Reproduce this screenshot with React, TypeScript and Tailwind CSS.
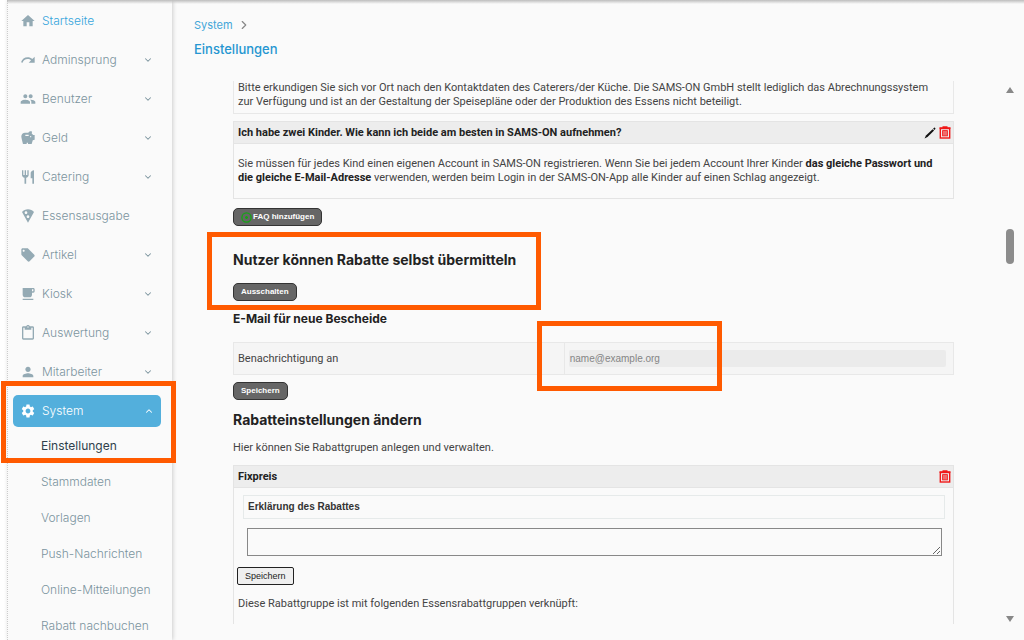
import React, { useState } from 'react';
import type { IconType } from 'react-icons';
import {
    MdContentPaste,
    MdHome,
    MdLocalCafe,
    MdLocalOffer,
    MdLocalPizza,
    MdPeople,
    MdPerson,
    MdRedo,
    MdRestaurant,
    MdSavings,
    MdSettings,
} from 'react-icons/md';
import { ChevronDown, ChevronRight, ChevronUp } from 'lucide-react';

interface NavItem {
    label: string;
    icon: IconType;
    expandable?: boolean;
    active?: boolean;
}

const navItems: NavItem[] = [
    { label: 'Startseite', icon: MdHome, active: true },
    { label: 'Adminsprung', icon: MdRedo, expandable: true },
    { label: 'Benutzer', icon: MdPeople, expandable: true },
    { label: 'Geld', icon: MdSavings, expandable: true },
    { label: 'Catering', icon: MdRestaurant, expandable: true },
    { label: 'Essensausgabe', icon: MdLocalPizza },
    { label: 'Artikel', icon: MdLocalOffer, expandable: true },
    { label: 'Kiosk', icon: MdLocalCafe, expandable: true },
    { label: 'Auswertung', icon: MdContentPaste, expandable: true },
    { label: 'Mitarbeiter', icon: MdPerson, expandable: true },
];

const systemItems = [
    'Einstellungen',
    'Stammdaten',
    'Vorlagen',
    'Push-Nachrichten',
    'Online-Mitteilungen',
    'Rabatt nachbuchen',
];

const Highlight = ({ className }: { className: string }) => (
    <div className={`pointer-events-none absolute z-20 border-[5px] border-[#ff5a00] ${className}`} />
);

const DarkButton = ({ children }: { children: React.ReactNode }) => (
    <button
        type="button"
        className="flex h-[18px] items-center rounded-[5px] border border-[#333] bg-[#666] px-[7px] font-['Liberation_Sans'] text-[8px] leading-none font-bold text-white"
    >
        {children}
    </button>
);

const TrashButton = () => (
    <button type="button" aria-label="Löschen" className="text-[#f01818]">
        <svg viewBox="0 0 12 13" className="h-[13px] w-3" fill="none" stroke="currentColor">
            <path d="M0.5 2h11M3.5 1h5" strokeWidth="1.4" />
            <rect x="1.3" y="2.5" width="9.4" height="9.5" strokeWidth="1.4" />
            <rect x="3.6" y="4.6" width="4.8" height="5.3" fill="currentColor" fillOpacity="0.6" strokeWidth="0.8" />
        </svg>
    </button>
);

const Sidebar = () => (
    <nav className="relative z-10 ml-[7px] w-[165px] shrink-0 border-l border-dotted border-[#ccc] bg-[#fafafa] pt-px font-['Inter',sans-serif] font-light text-[#7b949e] shadow-[1px_0_4px_rgba(0,0,0,0.18)]">
        <ul>
            {navItems.map(({ label, icon: Icon, expandable, active }) => (
                <li key={label}>
                    <a href="#" className="flex h-[39px] items-center pr-[19px] pl-3 text-[12px]">
                        <Icon className="mr-[6px] size-4 text-[#94aab4]" />
                        <span className={active ? 'text-[#36a5dc]' : ''}>{label}</span>
                        {expandable && <ChevronDown className="ml-auto size-[10px]" strokeWidth={2.5} />}
                    </a>
                </li>
            ))}
        </ul>
        <div className="relative mt-1">
            <a href="#" className="mr-[11px] ml-[5px] flex h-8 items-center rounded-[5px] bg-[#53afdc] px-[7px] text-[12px] text-white">
                <MdSettings className="mr-[6px] size-4" />
                System
                <ChevronUp className="ml-auto size-[10px]" strokeWidth={2.5} />
            </a>
            <ul className="pt-px">
                {systemItems.map((label, i) => (
                    <li key={label}>
                        <a
                            href="#"
                            className={`flex h-9 items-center pl-[33px] text-[12px] whitespace-nowrap ${i === 0 ? 'font-normal text-[#2f3f4c]' : ''}`}
                        >
                            {label}
                        </a>
                    </li>
                ))}
            </ul>
            <Highlight className="-top-[14px] -left-[7px] h-[82px] w-[175px]" />
        </div>
    </nav>
);

const FaqSection = () => (
    <section>
        <div className="border-x border-b border-[#e8e8e8] px-1 pb-1">
            Bitte erkundigen Sie sich vor Ort nach den Kontaktdaten des Caterers/der Küche. Die SAMS-ON GmbH stellt lediglich das Abrechnungssystem
            <br />
            zur Verfügung und ist an der Gestaltung der Speisepläne oder der Produktion des Essens nicht beteiligt.
        </div>
        <article className="mt-[7px] border border-[#e4e4e4]">
            <header className="flex h-[22px] items-center border-b border-[#e4e4e4] bg-[#ededed] pr-[2px] pl-1">
                <h4 className="mr-auto font-bold text-[#222]">Ich habe zwei Kinder. Wie kann ich beide am besten in SAMS-ON aufnehmen?</h4>
                <button type="button" aria-label="Bearbeiten" className="mr-[3px]">
                    <svg viewBox="0 0 12 12" className="size-3" fill="#111">
                        <path d="M0.5 11.5 2 8.4 8.6 2.2 10.1 3.6 3.5 10z" />
                        <path d="M9.1 1.7 10.1 0.8q.6-.4 1.1.1t.1 1l-.8 1.2z" />
                    </svg>
                </button>
                <TrashButton />
            </header>
            <p className="px-1 py-[13px]">
                Sie müssen für jedes Kind einen eigenen Account in SAMS-ON registrieren. Wenn Sie bei jedem Account Ihrer Kinder{' '}
                <strong className="text-[#222]">das gleiche Passwort und</strong>
                <br />
                <strong className="text-[#222]">die gleiche E-Mail-Adresse</strong> verwenden, werden beim Login in der SAMS-ON-App alle Kinder auf einen
                Schlag angezeigt.
            </p>
        </article>
        <div className="mt-[9px]">
            <DarkButton>
                <svg viewBox="0 0 11 11" className="mr-px size-[11px]" fill="none" stroke="#14a514">
                    <circle cx="5.5" cy="5.5" r="4.6" strokeWidth="1.3" />
                    <path d="M5.5 4v3M4 5.5h3" strokeWidth="1.4" />
                </svg>
                FAQ hinzufügen
            </DarkButton>
        </div>
    </section>
);

const NotificationSection = () => {
    const [mail, setMail] = useState('');

    return (
        <section>
            <h3 className="mt-2 font-['Inter',sans-serif] text-[12px] leading-5 font-bold text-[#222]">E-Mail für neue Bescheide</h3>
            <div className="mt-[13px] mb-[7px] flex h-[33px] border border-[#e8e8e8] bg-[#f5f5f5]">
                <label htmlFor="mail" className="flex w-[46%] items-center border-r border-[#e8e8e8] pl-1">
                    Benachrichtigung an
                </label>
                <div className="relative flex flex-1 items-center pr-[7px] pl-1">
                    <input
                        id="mail"
                        type="email"
                        placeholder="name@example.org"
                        value={mail}
                        onChange={(e) => setMail(e.target.value)}
                        className="h-[17px] w-full rounded-[2px] bg-[#ebebeb] px-px font-['Liberation_Sans'] text-[10px] placeholder:text-[#858585]"
                    />
                    <Highlight className="-top-[22px] -left-[28px] h-[70px] w-[185px]" />
                </div>
            </div>
            <DarkButton>Speichern</DarkButton>
        </section>
    );
};

const DiscountSection = () => (
    <section>
        <h2 className="mt-[10px] font-['Inter',sans-serif] text-[14px] leading-5 font-bold text-[#222]">Rabatteinstellungen ändern</h2>
        <p className="mt-[11px]">Hier können Sie Rabattgrupen anlegen und verwalten.</p>
        <article className="mt-[10px] border border-[#e4e4e4] pb-10">
            <header className="flex h-[22px] items-center border-b border-[#e4e4e4] bg-[#ededed] pr-[2px] pl-1">
                <h4 className="mr-auto font-bold text-[#222]">Fixpreis</h4>
                <TrashButton />
            </header>
            <label
                htmlFor="explanation"
                className="mt-[7px] mr-2 ml-[9px] flex h-6 items-center border border-[#e6eaea] px-1 font-['Liberation_Sans'] text-[10px] font-bold text-[#333]"
            >
                Erklärung des Rabattes
            </label>
            <textarea id="explanation" className="mt-[9px] ml-[13px] block h-7 w-[calc(100%-24px)] border border-[#888]" />
            <button
                type="button"
                className="mt-[11px] ml-[3px] block h-[18px] rounded-[2px] border border-[#222] bg-[#efefef] px-[7px] font-['Liberation_Sans'] text-[9px] leading-none text-[#222]"
            >
                Speichern
            </button>
            <p className="mt-3 px-1">Diese Rabattgruppe ist mit folgenden Essensrabattgruppen verknüpft:</p>
        </article>
    </section>
);

const Scrollbar = () => (
    <div className="flex w-7 shrink-0 flex-col items-center pt-[6px] pb-[2px]">
        <svg viewBox="0 0 8 6" className="h-[6px] w-2" fill="#888">
            <path d="M4 0 8 6H0z" />
        </svg>
        <div className="mt-[136px] h-[35px] w-2 rounded-full bg-[#8c8c8c]" />
        <svg viewBox="0 0 8 6" className="mt-auto h-[6px] w-2" fill="#888">
            <path d="M4 6 8 0H0z" />
        </svg>
    </div>
);

export default function App() {
    return (
        <div className="relative flex h-screen overflow-hidden bg-white font-['Roboto',sans-serif] text-[11px] leading-[14px] text-[#444]">
            <Sidebar />
            <main className="flex min-w-0 flex-1 flex-col bg-[#fafafa] pb-4">
                <header className="h-[81px] shrink-0 pt-[18px] pl-[22px] font-['Inter',sans-serif]">
                    <a href="#" className="flex items-center gap-1 text-[#43a6d8]">
                        System
                        <ChevronRight className="size-[14px] text-[#888]" strokeWidth={2} />
                    </a>
                    <h1 className="mt-[7px] text-[13px] leading-5 font-medium text-[#2596d1]">Einstellungen</h1>
                </header>
                <div className="flex min-h-0 flex-1">
                    <div className="flex-1 overflow-hidden pr-[42px] pl-[61px] whitespace-nowrap">
                        <FaqSection />
                        <section className="relative mt-6">
                            <h2 className="mb-[13px] font-['Inter',sans-serif] text-[14px] leading-5 font-bold text-[#222]">
                                Nutzer können Rabatte selbst übermitteln
                            </h2>
                            <DarkButton>Ausschalten</DarkButton>
                            <Highlight className="-top-[18px] -left-[26px] h-[78px] w-[334px]" />
                        </section>
                        <NotificationSection />
                        <DiscountSection />
                    </div>
                    <Scrollbar />
                </div>
            </main>
            <div className="pointer-events-none absolute inset-x-0 top-0 z-10 ml-[7px] h-1 bg-linear-to-b from-[#bdbdbd] to-transparent" />
        </div>
    );
}
